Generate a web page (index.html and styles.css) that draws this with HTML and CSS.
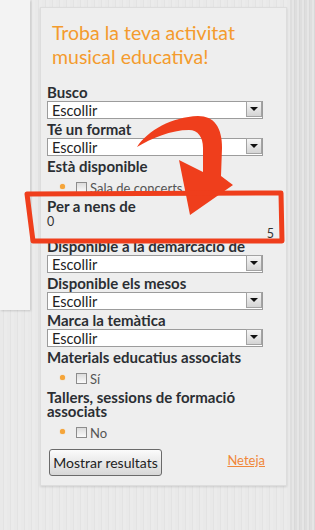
FILE: index.html
```html
<!DOCTYPE html>
<html lang="ca">
<head>
    <meta charset="UTF-8">
    <meta name="viewport" content="width=device-width, initial-scale=1.0">
    <title>Troba la teva activitat musical educativa</title>
    <link rel="stylesheet" href="styles.css">
</head>
<body>
    <div class="page">
        <div class="side"></div>

        <form class="panel">
            <h2 class="title">Troba la teva activitat musical educativa!</h2>

            <label class="lbl">Busco</label>
            <div class="sel"><select><option>Escollir</option></select><span class="arrow"></span></div>

            <label class="lbl">Té un format</label>
            <div class="sel"><select><option>Escollir</option></select><span class="arrow"></span></div>

            <label class="lbl">Està disponible</label>
            <ul class="checks">
                <li><input type="checkbox"> Sala de concerts</li>
            </ul>

            <label class="lbl">Per a nens de</label>
            <div class="range">
                <span class="min">0</span>
                <span class="max">5</span>
            </div>

            <label class="lbl">Disponible a la demarcació de</label>
            <div class="sel"><select><option>Escollir</option></select><span class="arrow"></span></div>

            <label class="lbl">Disponible els mesos</label>
            <div class="sel"><select><option>Escollir</option></select><span class="arrow"></span></div>

            <label class="lbl">Marca la temàtica</label>
            <div class="sel"><select><option>Escollir</option></select><span class="arrow"></span></div>

            <label class="lbl">Materials educatius associats</label>
            <ul class="checks">
                <li><input type="checkbox"> Sí</li>
            </ul>

            <label class="lbl">Tallers, sessions de formació associats</label>
            <ul class="checks">
                <li><input type="checkbox"> No</li>
            </ul>

            <div class="actions">
                <button type="button" class="btn">Mostrar resultats</button>
                <a href="#" class="reset">Neteja</a>
            </div>
        </form>

        <div class="edge"></div>
    </div>

    <!-- marca vermella feta a mà sobre la captura -->
    <svg class="mark" width="315" height="530" viewBox="0 0 315 530">
        <path d="M137,147 C148,130 172,117 198,116 C214,116 222,127 222,148 L221,176 L233,185 L190,215 L179,160 L203,172 L203,148 C203,137 198,130 189,130 C171,130 152,138 137,147 Z" fill="#ef3e1c"/>
        <polygon points="27,194 281,193 282,241 33,241" fill="none" stroke="#ef3e1c" stroke-width="5" stroke-linejoin="round"/>
    </svg>
</body>
</html>
```

FILE: styles.css
```css
body {
    margin: 0;
    position: relative;
    font-family: Lato, "Open Sans", sans-serif;
    background: repeating-linear-gradient(90deg, #e9e9e9 0 3px, #e3e3e3 3px 4px, #ebebeb 4px 7px);
}

.page {
    display: flex;
    align-items: flex-start;
    height: 530px;
}

.side {
    width: 30px;
    height: 310px;
    background: #f3f3f3;
    box-shadow: 1px 1px 2px rgba(0, 0, 0, 0.15);
}

.panel {
    width: 239px;
    margin: 7px 0 0 10px;
    padding: 13px 0 9px 6px;
    background: #eeeeee;
    border: 1px solid #dddddd;
    box-shadow: 0 1px 2px rgba(0, 0, 0, 0.12);
}

.title {
    margin: 0 0 12px 5px;
    font-size: 19.5px;
    line-height: 24px;
    font-weight: normal;
    color: #f49b2d;
}

.lbl {
    display: block;
    padding-top: 4px;
    font-size: 15px;
    line-height: 14px;
    font-weight: bold;
    color: #2b2e33;
}

.sel {
    position: relative;
    width: 216px;
    height: 18px;
    margin-top: 1px;
}

.sel select {
    appearance: none;
    width: 216px;
    height: 18px;
    margin: 0;
    padding: 0 0 0 4px;
    border: 1px solid #9c9c9c;
    border-radius: 0;
    background: #fff;
    font-family: Lato, sans-serif;
    font-size: 14.5px;
    color: #222;
}

.arrow {
    position: absolute;
    right: 1px;
    top: 1px;
    width: 14px;
    height: 14px;
    border: 1px solid #a3a3a3;
    background: linear-gradient(#f6f6f6, #d4d4d4);
}

.arrow::after {
    content: "";
    position: absolute;
    left: 3px;
    top: 5px;
    border-left: 4px solid transparent;
    border-right: 4px solid transparent;
    border-top: 4px solid #111;
}

.checks {
    list-style: none;
    margin: 0;
    padding: 8px 0 1px 13px;
}

.checks li {
    position: relative;
    display: flex;
    align-items: center;
    height: 13px;
    padding-left: 16px;
    font-size: 13px;
    color: #555;
}

.checks li::before {
    content: "";
    position: absolute;
    left: 0;
    top: 3px;
    width: 5px;
    height: 5px;
    border-radius: 50%;
    background: #f5a53a;
    box-shadow: 0 0 1px #f5a53a;
}

.checks input {
    appearance: none;
    width: 11px;
    height: 11px;
    margin: 0 3px 0 0;
    border: 1px solid #8c8c8c;
    background: linear-gradient(#dcdcdc, #fafafa);
}

.range {
    width: 227px;
    height: 19px;
    padding-top: 3px;
    font-size: 12.5px;
    line-height: 12px;
    color: #333;
}

.range .min {
    display: block;
}

.range .max {
    display: block;
    text-align: right;
}

.actions {
    display: flex;
    justify-content: space-between;
    align-items: flex-start;
    width: 218px;
    margin-top: 9px;
}

.btn {
    width: 113px;
    height: 27px;
    margin-left: 2px;
    padding: 0;
    border: 1px solid #6a6a6a;
    border-radius: 3px;
    background: linear-gradient(#fbfbfb, #d7d7d7);
    font-family: Lato, sans-serif;
    font-size: 14px;
    color: #222;
}

.reset {
    margin-top: 3px;
    font-size: 13px;
    color: #f0873a;
}

.edge {
    align-self: stretch;
    width: 25px;
    margin-left: auto;
    background: repeating-linear-gradient(90deg, #dedede 0 2px, #e6e6e6 2px 4px, #d9d9d9 4px 5px);
}

.mark {
    position: absolute;
    left: 0;
    top: 0;
    pointer-events: none;
}
```
